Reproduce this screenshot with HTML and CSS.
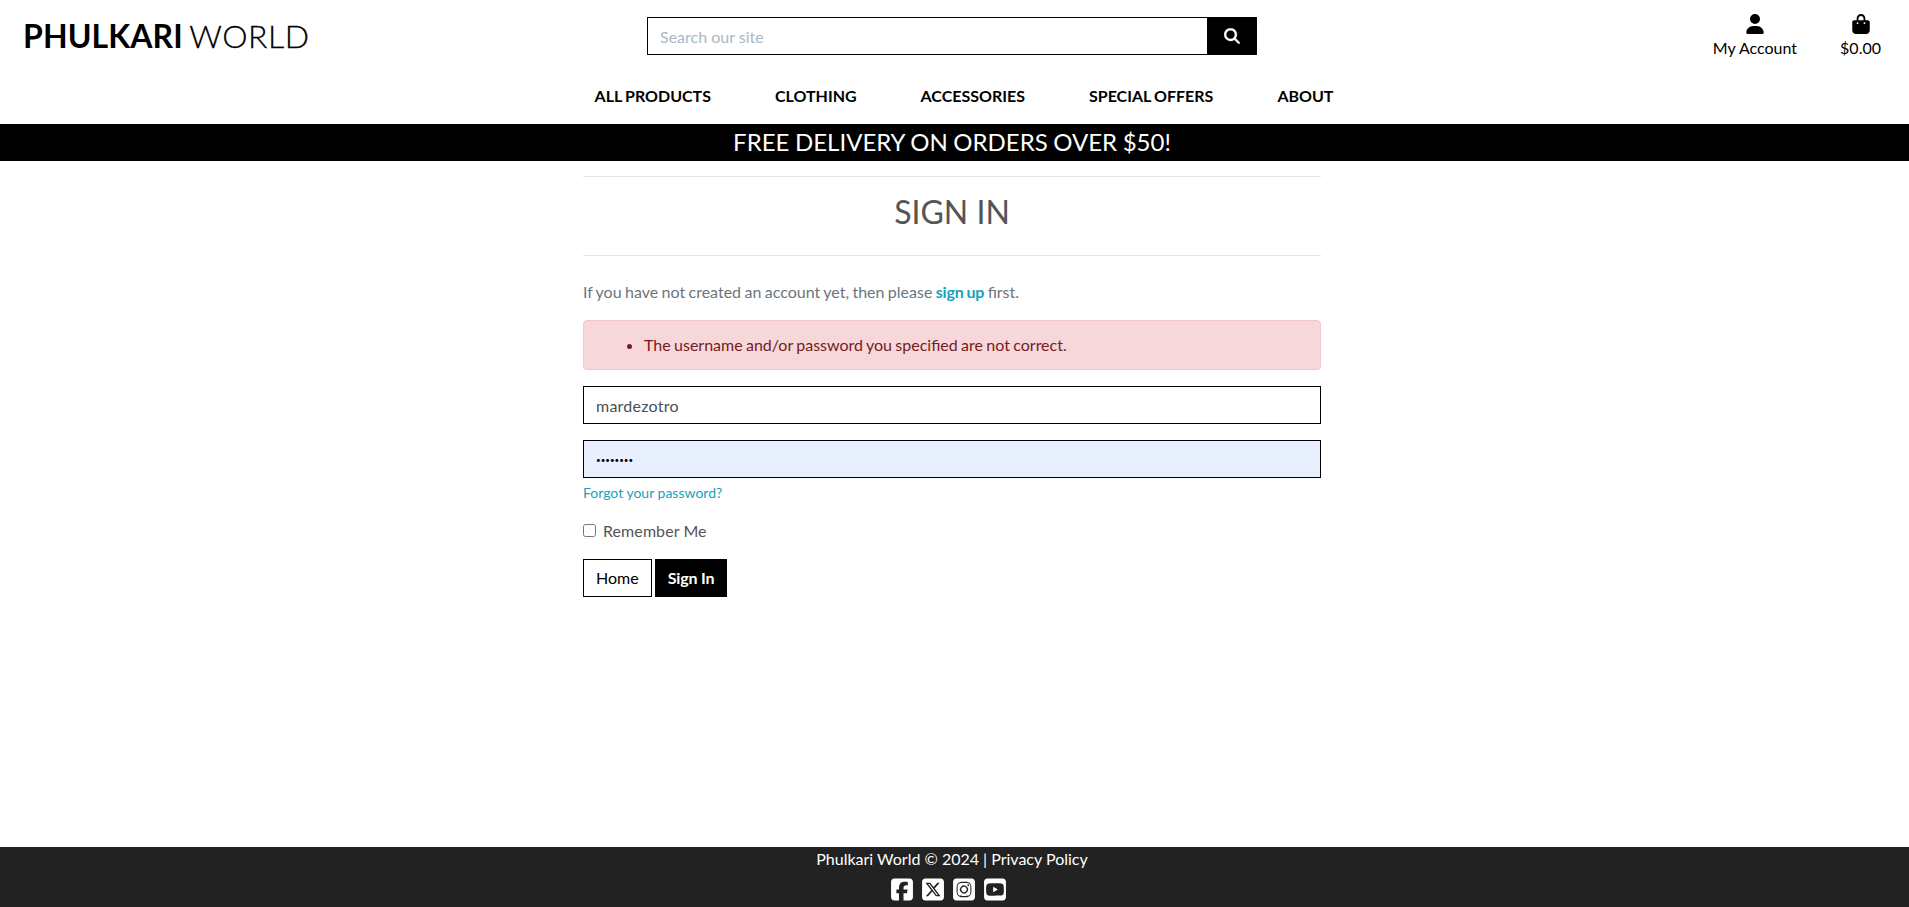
FILE: index.html
```html
<!DOCTYPE html>
<html lang="en">
<head>
<meta charset="utf-8">
<title>Phulkari World</title>
<link rel="stylesheet" href="styles.css">
</head>
<body>
<header class="header">
  <div class="topbar">
    <a class="logo" href="#"><strong>PHULKARI</strong> WORLD</a>
    <form class="search">
      <input class="search-input" type="text" placeholder="Search our site">
      <button class="search-button" type="button" aria-label="Search"><svg width="16" height="16" viewBox="-6 -6 524 524" fill="currentColor" stroke="currentColor" stroke-width="14"><path d="M416 208c0 45.900-14.900 88.300-40 122.700L502.600 457.400c12.500 12.500 12.500 32.800 0 45.300s-32.800 12.500-45.300 0L330.700 376c-34.400 25.200-76.800 40-122.700 40C93.100 416 0 322.900 0 208S93.100 0 208 0S416 93.100 416 208zM208 352a144 144 0 1 0 0-288 144 144 0 1 0 0 288z"/></svg></button>
    </form>
    <div class="user-links">
      <a class="user-link" href="#"><svg width="18" height="20" viewBox="0 0 448 512" fill="currentColor"><path d="M224 256A128 128 0 1 0 224 0a128 128 0 1 0 0 256zm-45.700 48C79.800 304 0 383.800 0 482.300C0 498.700 13.300 512 29.700 512H418.300c16.400 0 29.700-13.300 29.700-29.700C448 383.800 368.200 304 269.700 304H178.300z"/></svg><span>My Account</span></a>
      <a class="user-link" href="#"><svg width="18" height="20" viewBox="0 0 448 512" fill="currentColor"><path d="M160 112c0-35.300 28.700-64 64-64s64 28.700 64 64v48H160V112zm-48 48H48c-26.500 0-48 21.500-48 48V416c0 53 43 96 96 96H352c53 0 96-43 96-96V208c0-26.500-21.500-48-48-48H336V112C336 50.100 285.900 0 224 0S112 50.100 112 112v48zm24 48a24 24 0 1 1 0 48 24 24 0 1 1 0-48zm152 24a24 24 0 1 1 48 0 24 24 0 1 1-48 0z"/></svg><span>$0.00</span></a>
    </div>
  </div>
  <nav class="nav">
    <a href="#">ALL PRODUCTS</a><a href="#">CLOTHING</a><a href="#">ACCESSORIES</a><a href="#">SPECIAL OFFERS</a><a href="#">ABOUT</a>
  </nav>
</header>
<div class="banner">FREE DELIVERY ON ORDERS OVER $50!</div>
<main class="content">
  <h2 class="title">SIGN IN</h2>
  <p class="intro">If you have not created an account yet, then please <a href="#">sign up</a> first.</p>
  <div class="alert"><ul><li>The username and/or password you specified are not correct.</li></ul></div>
  <form class="login">
    <input class="field" type="text" value="mardezotro" aria-label="Username">
    <input class="field password" type="password" value="password" aria-label="Password">
    <a class="forgot" href="#">Forgot your password?</a>
    <label class="remember"><input type="checkbox"><span>Remember Me</span></label>
    <div class="actions"><a class="btn" href="#">Home</a><button class="btn primary" type="button">Sign In</button></div>
  </form>
</main>
<footer class="footer">
  <p>Phulkari World © 2024 | <a href="#">Privacy Policy</a></p>
  <div class="social">
    <a href="#" aria-label="Facebook"><svg viewBox="0 0 448 512"><path d="M64 32C28.700 32 0 60.700 0 96V416c0 35.300 28.700 64 64 64h98.200V334.200H109.400V256h52.800V222.300c0-87.100 39.400-127.500 125-127.500c16.200 0 44.200 3.200 55.700 6.400V172c-6-.6-16.500-1-29.600-1c-42 0-58.200 15.900-58.200 57.200V256h83.600l-14.400 78.200H255V480H384c35.300 0 64-28.700 64-64V96c0-35.300-28.700-64-64-64H64z"/></svg></a>
    <a href="#" aria-label="X"><svg viewBox="0 0 448 512"><path d="M64 32C28.700 32 0 60.700 0 96V416c0 35.300 28.700 64 64 64H384c35.300 0 64-28.700 64-64V96c0-35.300-28.700-64-64-64H64zm297.100 84L257.300 234.600 379.400 396H283.800L209 298.100 123.300 396H75.800l111-126.900L69.700 116h98l67.700 89.500L313.600 116h47.500zM323.300 367.600L153.400 142.900H125.100L296.900 367.600h26.300z"/></svg></a>
    <a href="#" aria-label="Instagram"><svg viewBox="0 0 448 512"><path d="M194.400 211.700a53.300 53.300 0 1 0 59.300 88.700 53.300 53.300 0 1 0-59.300-88.700zm142.300-68.400c-5.200-5.200-11.500-9.300-18.400-12c-18.100-7.100-57.600-6.800-83.100-6.500c-4.100 0-7.900 .1-11.200 .1c-3.300 0-7.200 0-11.400-.1c-25.500-.3-64.800-.7-82.900 6.500c-6.900 2.700-13.100 6.800-18.400 12s-9.300 11.500-12 18.400c-7.100 18.100-6.700 57.700-6.500 83.200c0 4.100 .1 7.900 .1 11.100s0 7-.1 11.100c-.2 25.500-.6 65.100 6.500 83.200c2.700 6.900 6.800 13.100 12 18.400s11.500 9.300 18.400 12c18.100 7.100 57.600 6.800 83.100 6.500c4.100 0 7.900-.1 11.200-.1c3.300 0 7.200 0 11.400 .1c25.500 .3 64.800 .7 82.900-6.500c6.900-2.700 13.100-6.800 18.400-12s9.300-11.500 12-18.400c7.200-18 6.800-57.400 6.500-83c0-4.200-.1-8.100-.1-11.400s0-7.100 .1-11.400c.3-25.500 .7-64.900-6.500-83c-2.700-6.900-6.800-13.100-12-18.400zm-67.100 44.500a82 82 0 1 1-91.100 136.400 82 82 0 1 1 91.100-136.400zm29.200-1.300a19.100 19.100 0 1 1 21.200-31.800 19.100 19.100 0 1 1-21.200 31.800zM64 32C28.700 32 0 60.700 0 96V416c0 35.300 28.700 64 64 64H384c35.300 0 64-28.700 64-64V96c0-35.300-28.700-64-64-64H64zm281.100 95.100c26.200 26.200 28.900 56.900 30.400 91.300c1.500 36.900 1.500 38.400 0 75.300c-1.700 34.400-4.200 65.100-30.400 91.300c-26.200 26.200-56.900 28.900-91.300 30.500c-36.900 1.500-22.700 1.500-59.600 0c-34.400-1.700-65.100-4.200-91.300-30.400c-26.300-26.200-28.900-56.900-30.500-91.300c-1.500-36.900-1.500-38.400 0-75.300c1.700-34.400 4.200-65.100 30.500-91.300c26.200-26.200 56.900-28.900 91.300-30.500c36.900-1.500 22.700-1.500 59.600 0c34.400 1.700 65.100 4.200 91.300 30.400z"/></svg></a>
    <a href="#" aria-label="YouTube"><svg viewBox="0 0 448 512"><path d="M282 256.200l-95.200-54.100V310.300L282 256.200zM384 32H64C28.700 32 0 60.700 0 96V416c0 35.300 28.700 64 64 64H384c35.300 0 64-28.700 64-64V96c0-35.300-28.700-64-64-64zm14.400 136.100c7.600 28.600 7.600 88.200 7.600 88.200s0 59.600-7.600 88.100c-4.200 15.800-16.500 27.700-32.200 31.900C337.900 384 224 384 224 384s-113.900 0-142.200-7.600c-15.700-4.200-28-16.100-32.200-31.900C42 315.900 42 256.300 42 256.300s0-59.700 7.600-88.200c4.200-15.800 16.500-28.200 32.200-32.400C110.100 128 224 128 224 128s113.900 0 142.200 7.700c15.700 4.200 28 16.600 32.200 32.400z"/></svg></a>
  </div>
</footer>
</body>
</html>
```

FILE: styles.css
```css
* { box-sizing: border-box; }
body {
  margin: 0;
  height: 907px;
  display: flex;
  flex-direction: column;
  overflow: hidden;
  background: #fff;
  color: #555;
  font: 400 16px/24px Lato, sans-serif;
}
a { color: inherit; text-decoration: none; }
input, button { font: inherit; }
svg { display: block; }

.header {
  height: 124px;
  padding-right: 5px;
  color: #000;
}
.topbar {
  display: grid;
  grid-template-columns: 1fr 610px 1fr;
  height: 72px;
  padding-top: 17px;
}
.logo {
  padding-left: 23px;
  font-size: 32px;
  line-height: 38px;
  font-weight: 300;
  letter-spacing: .5px;
  word-spacing: -2px;
  -webkit-text-stroke: .3px #000;
}
.logo strong { font-weight: 700; letter-spacing: .1px; -webkit-text-stroke: 0; }
.search { display: flex; height: 38px; }
.search-input, .field {
  height: 38px;
  padding: 6px 12px;
  border: 1px solid #000;
  border-radius: 0;
  outline: 0;
  color: #495057;
  background: #fff;
}
.search-input { width: 560px; border-right: 0; }
.search-input::placeholder { color: #aab7c4; opacity: 1; }
.search-button {
  display: flex;
  align-items: center;
  justify-content: center;
  width: 50px;
  padding: 0;
  border: 0;
  background: #000;
  color: #fff;
}
.user-links {
  display: flex;
  justify-content: flex-end;
  gap: 43px;
  margin-top: -3px;
  padding-right: 23px;
}
.user-link {
  display: flex;
  flex-direction: column;
  align-items: center;
  line-height: 24px;
}
.user-link span { margin-top: 2px; }
.nav {
  display: flex;
  justify-content: center;
  gap: 64px;
  padding: 12px 0 0 24px;
  font-weight: 700;
  word-spacing: -.7px;
}
.banner {
  height: 37px;
  padding-right: 5px;
  background: #000;
  color: #fff;
  font-size: 24px;
  line-height: 35px;
  word-spacing: -.6px;
  text-align: center;
}
.content {
  flex: 1;
  width: 738px;
  margin: 15px 0 0 583px;
}
.title {
  height: 80px;
  margin: 0 0 24px;
  padding-top: 16px;
  border: solid #e5e5e5;
  border-width: 1px 0;
  font-size: 32px;
  font-weight: 400;
  line-height: 38px;
  text-align: center;
}
.intro { margin: 0 0 16px; color: #6c757d; word-spacing: -.7px; }
.intro a { color: #17a2b8; font-weight: 700; letter-spacing: -.2px; }
.alert {
  height: 50px;
  margin-bottom: 16px;
  padding: 12px 20px;
  border: 1px solid #f5c6cb;
  border-radius: 4px;
  background: #f8d7da;
  color: #721c24;
  word-spacing: -.75px;
}
.alert ul { margin: 0; padding-left: 40px; }
.login { display: flex; flex-direction: column; align-items: flex-start; }
.field { width: 100%; margin-bottom: 16px; letter-spacing: .25px; }
.password {
  margin-bottom: 4px;
  padding-top: 8px;
  background: #e8f0fe;
  color: #000;
  font-size: 8px;
  letter-spacing: 0;
}
.forgot { color: #17a2b8; font-size: 14px; line-height: 21px; }
.remember { display: flex; align-items: center; margin-top: 16px; }
.remember input { width: 13px; height: 13px; margin: 0 7px 1px 0; }
.remember span { letter-spacing: .08px; }
.actions { display: flex; gap: 3px; margin-top: 16px; }
.btn {
  height: 38px;
  padding: 6px 12px;
  border: 1px solid #000;
  background: #fff;
  color: #000;
}
.primary {
  background: #000;
  color: #fff;
  font-weight: 700;
  letter-spacing: -.15px;
}
.footer {
  height: 60px;
  padding-right: 5px;
  background: #222;
  color: #fff;
  text-align: center;
}
.footer p { margin: 0; }
.social {
  display: flex;
  justify-content: center;
  gap: 9px;
  margin-top: 6px;
  padding-right: 7px;
}
.social svg { width: 22px; height: 25px; fill: #fff; }
```
